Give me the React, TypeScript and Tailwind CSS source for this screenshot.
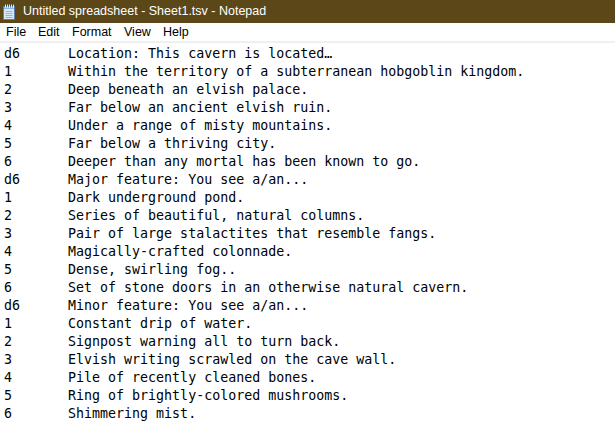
import React from "react";

const lines: [string, string][] = [
  ["d6", "Location: This cavern is located…"],
  ["1", "Within the territory of a subterranean hobgoblin kingdom."],
  ["2", "Deep beneath an elvish palace."],
  ["3", "Far below an ancient elvish ruin."],
  ["4", "Under a range of misty mountains."],
  ["5", "Far below a thriving city."],
  ["6", "Deeper than any mortal has been known to go."],
  ["d6", "Major feature: You see a/an..."],
  ["1", "Dark underground pond."],
  ["2", "Series of beautiful, natural columns."],
  ["3", "Pair of large stalactites that resemble fangs."],
  ["4", "Magically-crafted colonnade."],
  ["5", "Dense, swirling fog.."],
  ["6", "Set of stone doors in an otherwise natural cavern."],
  ["d6", "Minor feature: You see a/an..."],
  ["1", "Constant drip of water."],
  ["2", "Signpost warning all to turn back."],
  ["3", "Elvish writing scrawled on the cave wall."],
  ["4", "Pile of recently cleaned bones."],
  ["5", "Ring of brightly-colored mushrooms."],
  ["6", "Shimmering mist."],
];

function NotepadIcon() {
  return (
    <svg width="14" height="16" viewBox="0 0 14 16">
      <rect x="1.5" y="2.5" width="11" height="13" fill="#dbe9f7" stroke="#5b7fa8" />
      <rect x="2" y="3" width="10" height="2" fill="#8fb6e0" />
      <line x1="3.5" y1="7.5" x2="10.5" y2="7.5" stroke="#9ab4d0" />
      <line x1="3.5" y1="9.5" x2="10.5" y2="9.5" stroke="#9ab4d0" />
      <line x1="3.5" y1="11.5" x2="10.5" y2="11.5" stroke="#9ab4d0" />
      <line x1="3.5" y1="13.5" x2="10.5" y2="13.5" stroke="#9ab4d0" />
      {[3, 5, 7, 9, 11].map((x) => (
        <rect key={x} x={x} y="0.5" width="1" height="3.5" fill="#e6e6e6" />
      ))}
    </svg>
  );
}

const uiFont = { fontFamily: '"Liberation Sans", Arial, sans-serif' };

export default function App() {
  return (
    <div className="w-[615px] h-[437px] bg-white overflow-hidden flex flex-col">
      <div className="h-[23px] bg-[#5c4719] flex items-center pl-[2px] shrink-0">
        <NotepadIcon />
        <span className="ml-[7px] text-white text-[12.5px] leading-none" style={uiFont}>
          Untitled spreadsheet - Sheet1.tsv - Notepad
        </span>
      </div>
      <div className="h-[18px] flex items-center text-[12.5px] text-black shrink-0" style={uiFont}>
        <span className="ml-[6px] w-[32px]">File</span>
        <span className="w-[34px]">Edit</span>
        <span className="w-[52px]">Format</span>
        <span className="w-[39px]">View</span>
        <span>Help</span>
      </div>
      <div className="h-[2px] bg-[#f0f0f0] shrink-0" />
      <pre
        className="pl-[4px] pt-[2px] text-[13.3px] leading-[18px] text-black [tab-size:8] m-0"
        style={{ fontFamily: '"DejaVu Sans Mono", monospace' }}
      >
        {lines.map(([a, b]) => `${a}\t${b}`).join("\n")}
      </pre>
    </div>
  );
}
